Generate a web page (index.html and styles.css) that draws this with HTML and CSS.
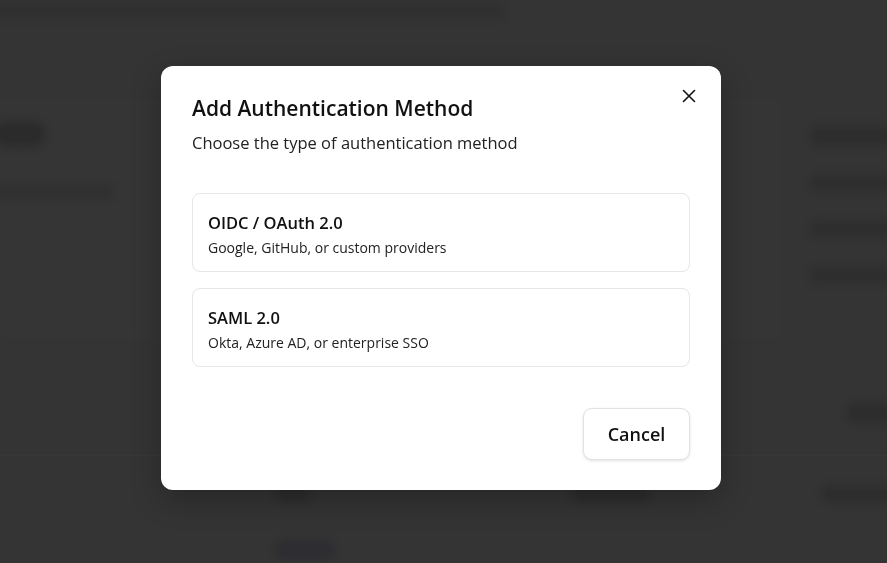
FILE: index.html
```html
<!DOCTYPE html>
<html lang="en">
<head>
<meta charset="utf-8">
<title>Add Authentication Method</title>
<link rel="stylesheet" href="styles.css">
</head>
<body>
<div class="page" aria-hidden="true">
  <div class="bar top-bar"></div>
  <div class="main">
    <div class="content">
      <div class="bar heading-bar"></div>
      <div class="bar sub-bar"></div>
    </div>
    <div class="side">
      <div class="bar side-title"></div>
      <div class="bar side-item"></div>
      <div class="bar side-item"></div>
      <div class="bar side-item"></div>
    </div>
  </div>
  <div class="action-row"><div class="bar act"></div></div>
  <div class="table-row">
    <div class="bar cell c1"></div>
    <div class="bar cell c2"></div>
    <div class="bar cell c3"></div>
  </div>
  <div class="table-row last">
    <div class="bar cell c1 blue"></div>
  </div>
</div>

<div class="overlay">
  <div class="dialog" role="dialog" aria-labelledby="dlg-title">
    <button class="close" aria-label="Close">
      <svg width="14" height="14" viewBox="0 0 14 14" fill="none" stroke="#111" stroke-width="1.6" stroke-linecap="round"><path d="M1.5 1.5L12.5 12.5M12.5 1.5L1.5 12.5"/></svg>
    </button>
    <h2 class="title" id="dlg-title">Add Authentication Method</h2>
    <p class="subtitle">Choose the type of authentication method</p>
    <div class="options">
      <button class="option">
        <span class="opt-title">OIDC / OAuth 2.0</span>
        <span class="opt-desc">Google, GitHub, or custom providers</span>
      </button>
      <button class="option">
        <span class="opt-title">SAML 2.0</span>
        <span class="opt-desc">Okta, Azure AD, or enterprise SSO</span>
      </button>
    </div>
    <div class="footer">
      <button class="cancel">Cancel</button>
    </div>
  </div>
</div>
</body>
</html>
```

FILE: styles.css
```css
html, body {
  margin: 0;
  padding: 0;
  height: 100%;
}
body {
  background: #343434;
  font-family: "Open Sans", "Noto Sans", "Liberation Sans", sans-serif;
  overflow: hidden;
}

/* blurred page behind the modal: soft blobs instead of readable content */
.page {
  height: 100%;
}
.bar {
  border-radius: 10px;
  background: rgba(0, 0, 0, 0.12);
  box-shadow: 0 0 10px 5px rgba(0, 0, 0, 0.12);
}
.top-bar {
  margin-top: 8px;
  width: 500px;
  height: 6px;
  background: rgba(0, 0, 0, 0.08);
  box-shadow: 0 0 10px 5px rgba(0, 0, 0, 0.08);
}
.main {
  display: flex;
  margin-top: 85px;
  height: 236px;
}
.content {
  flex: 0 0 778px;
  background: #353535;
  box-shadow: 2px 2px 6px rgba(255, 255, 255, 0.02);
}
.heading-bar {
  margin-top: 28px;
  width: 40px;
  height: 14px;
  background: rgba(0, 0, 0, 0.18);
  box-shadow: 0 0 10px 6px rgba(0, 0, 0, 0.18);
}
.sub-bar {
  margin-top: 48px;
  width: 110px;
  height: 6px;
  background: rgba(0, 0, 0, 0.08);
  box-shadow: 0 0 10px 5px rgba(0, 0, 0, 0.08);
}
.side {
  flex: 1;
  padding: 32px 0 0 36px;
}
.side-title {
  height: 10px;
  background: rgba(0, 0, 0, 0.12);
}
.side-item {
  margin-top: 38px;
  height: 8px;
  background: rgba(0, 0, 0, 0.1);
  box-shadow: 0 0 10px 5px rgba(0, 0, 0, 0.1);
}
.action-row {
  display: flex;
  justify-content: flex-end;
  margin-top: 72px;
}
.act {
  width: 36px;
  height: 12px;
}
.table-row {
  display: flex;
  align-items: center;
  margin-top: 36px;
  border-top: 1px solid rgba(255, 255, 255, 0.02);
  padding-top: 34px;
}
.table-row.last {
  border-top: none;
  padding-top: 48px;
  margin-top: 0;
}
.cell {
  height: 8px;
}
.c1 { margin-left: 280px; width: 26px; }
.c2 { margin-left: 270px; width: 70px; }
.c3 { margin-left: 180px; flex: 1; }
.blue { width: 50px; background: rgba(10, 10, 40, 0.15); box-shadow: 0 0 10px 5px rgba(10, 10, 40, 0.15); }

/* modal */
.overlay {
  position: fixed;
  inset: 0;
  display: flex;
  align-items: flex-start;
  justify-content: flex-start;
}
.dialog {
  position: relative;
  box-sizing: border-box;
  margin: 66px 0 0 161px;
  width: 560px;
  height: 424px;
  background: #fff;
  border-radius: 12px;
  padding: 27px 31px 30px 31px;
  display: flex;
  flex-direction: column;
  box-shadow: 0 10px 30px rgba(0,0,0,0.25);
}
.close {
  position: absolute;
  right: 21px;
  top: 19px;
  background: none;
  border: none;
  padding: 4px;
  cursor: pointer;
  line-height: 0;
}
.title {
  margin: 0;
  font-size: 21px;
  font-weight: 600;
  color: #111;
  line-height: 30px;
}
.subtitle {
  margin: 8px 0 0 0;
  font-size: 16.5px;
  color: #222;
  line-height: 24px;
}
.options {
  display: flex;
  flex-direction: column;
  gap: 16px;
  margin-top: 38px;
}
.option {
  box-sizing: border-box;
  height: 79px;
  display: flex;
  flex-direction: column;
  align-items: flex-start;
  justify-content: center;
  gap: 3px;
  padding: 3px 15px 0 15px;
  background: #fff;
  border: 1px solid #e6e6e6;
  border-radius: 8px;
  font-family: inherit;
  text-align: left;
  cursor: pointer;
}
.opt-title {
  font-size: 16.5px;
  font-weight: 600;
  color: #111;
  line-height: 24px;
}
.opt-desc {
  font-size: 14px;
  color: #222;
  line-height: 20px;
}
.footer {
  margin-top: auto;
  display: flex;
  justify-content: flex-end;
}
.cancel {
  width: 107px;
  height: 52px;
  background: #fff;
  border: 1px solid #e2e2e2;
  border-radius: 9px;
  box-shadow: 0 1px 3px rgba(0,0,0,0.12);
  font-family: inherit;
  font-size: 18px;
  font-weight: 600;
  color: #111;
  cursor: pointer;
}
```
